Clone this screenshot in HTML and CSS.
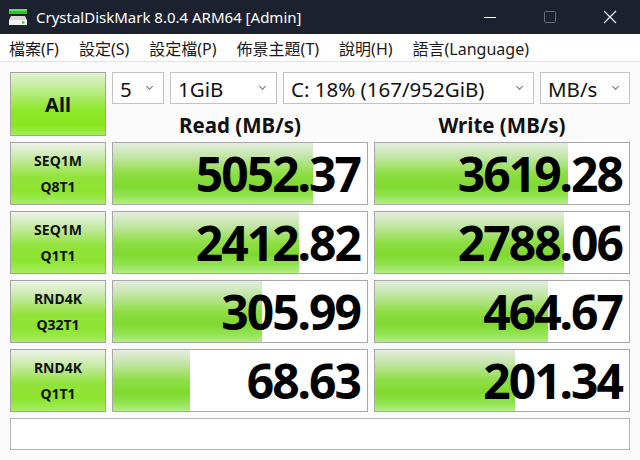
FILE: index.html
```html
<!DOCTYPE html>
<html lang="zh-Hant">

<head>
    <meta charset="UTF-8">
    <title>CrystalDiskMark 8.0.4 ARM64 [Admin]</title>
    <link rel="stylesheet" href="styles.css">
</head>

<body>
    <div class="ventana">
        <div class="barra-titulo">
            <svg class="icono" width="22" height="22" viewBox="0 0 22 22">
                <rect x="2" y="3" width="18" height="5" fill="#2fc32f" />
                <rect x="2" y="3" width="18" height="2" fill="#5fe65f" />
                <path d="M4 10 H18 L20 14 V19 H2 V14 Z" fill="#d8d8d8" />
                <rect x="2" y="14" width="18" height="5" fill="#f4f4f4" />
                <rect x="15" y="15.5" width="2.5" height="2" fill="#31c331" />
            </svg>
            <span class="titulo">CrystalDiskMark 8.0.4 ARM64 [Admin]</span>
            <div class="controles">
                <svg width="14" height="14" viewBox="0 0 14 14"><path d="M1 7.5 H13" stroke="#fff" stroke-width="1" /></svg>
                <svg class="deshabilitado" width="14" height="14" viewBox="0 0 14 14"><rect x="1.5" y="1.5" width="11" height="11" rx="1" fill="none" stroke="#6a6f7a" stroke-width="1" /></svg>
                <svg width="14" height="14" viewBox="0 0 14 14"><path d="M1 1 L13 13 M13 1 L1 13" stroke="#fff" stroke-width="1.1" /></svg>
            </div>
        </div>

        <div class="menu">
            <span>檔案(F)</span>
            <span>設定(S)</span>
            <span>設定檔(P)</span>
            <span>佈景主題(T)</span>
            <span>說明(H)</span>
            <span>語言(Language)</span>
        </div>

        <div class="panel">
            <button class="boton todo">All</button>
            <div class="cabecera">
                <div class="selectores">
                    <div class="combo c-veces">5</div>
                    <div class="combo c-tamano">1GiB</div>
                    <div class="combo c-unidad">C: 18% (167/952GiB)</div>
                    <div class="combo c-medida">MB/s</div>
                </div>
                <div class="titulos">
                    <span>Read (MB/s)</span>
                    <span>Write (MB/s)</span>
                </div>
            </div>

            <button class="boton prueba">SEQ1M<br>Q8T1</button>
            <div class="valor"><div class="barra" style="width: 200px;"></div><span>5052.37</span></div>
            <div class="valor"><div class="barra" style="width: 193px;"></div><span>3619.28</span></div>

            <button class="boton prueba">SEQ1M<br>Q1T1</button>
            <div class="valor"><div class="barra" style="width: 186px;"></div><span>2412.82</span></div>
            <div class="valor"><div class="barra" style="width: 189px;"></div><span>2788.06</span></div>

            <button class="boton prueba">RND4K<br>Q32T1</button>
            <div class="valor"><div class="barra" style="width: 149px;"></div><span>305.99</span></div>
            <div class="valor"><div class="barra" style="width: 173px;"></div><span>464.67</span></div>

            <button class="boton prueba">RND4K<br>Q1T1</button>
            <div class="valor"><div class="barra" style="width: 77px;"></div><span>68.63</span></div>
            <div class="valor"><div class="barra" style="width: 140px;"></div><span>201.34</span></div>

            <div class="estado"></div>
        </div>
    </div>
</body>

</html>
```

FILE: styles.css
```css
body {
    margin: 0;
    font-family: 'Noto Sans', 'Noto Sans CJK TC', sans-serif;
    background-color: #fbfbfb;
    width: 640px;
    height: 460px;
    overflow: hidden;
}

.barra-titulo {
    height: 34px;
    background-color: #1c2130;
    display: flex;
    align-items: center;
    color: #ffffff;
}

.icono {
    margin-left: 7px;
    margin-right: 7px;
}

.titulo {
    font-size: 15px;
}

.controles {
    margin-left: auto;
    display: flex;
    align-items: center;
    gap: 46px;
    margin-right: 23px;
}

.menu {
    height: 27px;
    background-color: #ffffff;
    border-bottom: 1px solid #e3e3e3;
    display: flex;
    align-items: center;
    padding-left: 9px;
    gap: 20px;
    font-size: 16px;
    color: #1a1a1a;
}

.panel {
    display: grid;
    grid-template-columns: 96px 256px 256px;
    grid-template-rows: 64px repeat(4, 63px) 32px;
    column-gap: 6px;
    row-gap: 6px;
    padding: 10px 10px 0 10px;
}

.boton {
    border: 1px solid #a3a3a3;
    background: linear-gradient(to bottom, #eef3ea 0%, #c6eaa6 25%, #92e33c 55%, #8de52f 80%, #a6ec64 100%);
    font-family: 'Noto Sans', sans-serif;
    font-weight: 700;
    color: #111111;
    padding: 0;
}

.todo {
    font-size: 20px;
    background: linear-gradient(to bottom, #e2f3d2 0%, #b9ec86 30%, #8de82a 60%, #8ae61f 85%, #a3ee59 100%);
}

.prueba {
    font-size: 14px;
    line-height: 26px;
}

.cabecera {
    grid-column: 2 / 4;
    display: flex;
    flex-direction: column;
}

.selectores {
    display: flex;
    gap: 6px;
    height: 32px;
}

.combo {
    position: relative;
    background-color: #ffffff;
    border: 1px solid #c2c2c2;
    font-size: 20.5px;
    line-height: 32px;
    padding-left: 7px;
    color: #111111;
    box-sizing: border-box;
}

.combo::after {
    content: '';
    position: absolute;
    right: 11px;
    top: 11px;
    width: 4px;
    height: 4px;
    border-right: 1px solid #777777;
    border-bottom: 1px solid #777777;
    transform: rotate(45deg);
}

.c-veces { width: 52px; }
.c-tamano { width: 107px; }
.c-unidad { width: 251px; }
.c-medida { width: 90px; }

.titulos {
    display: grid;
    grid-template-columns: 256px 256px;
    column-gap: 6px;
    text-align: center;
    font-weight: 700;
    font-size: 20.5px;
    line-height: 30px;
    padding-top: 6px;
    color: #111111;
}

.valor {
    position: relative;
    background-color: #ffffff;
    border: 1px solid #a8a8a8;
    text-align: right;
    overflow: hidden;
}

.barra {
    position: absolute;
    left: 0;
    top: 0;
    bottom: 0;
    background: linear-gradient(to bottom, #e4ede0 0%, #c3e6a7 22%, #8fde45 50%, #7fd92e 70%, #94e455 88%, #b3ee86 100%);
}

.valor span {
    position: relative;
    font-size: 48px;
    font-weight: 700;
    letter-spacing: -2px;
    line-height: 61px;
    padding-right: 7px;
    color: #000000;
}

.estado {
    grid-column: 1 / 4;
    background-color: #ffffff;
    border: 1px solid #b5b5b5;
}
```
